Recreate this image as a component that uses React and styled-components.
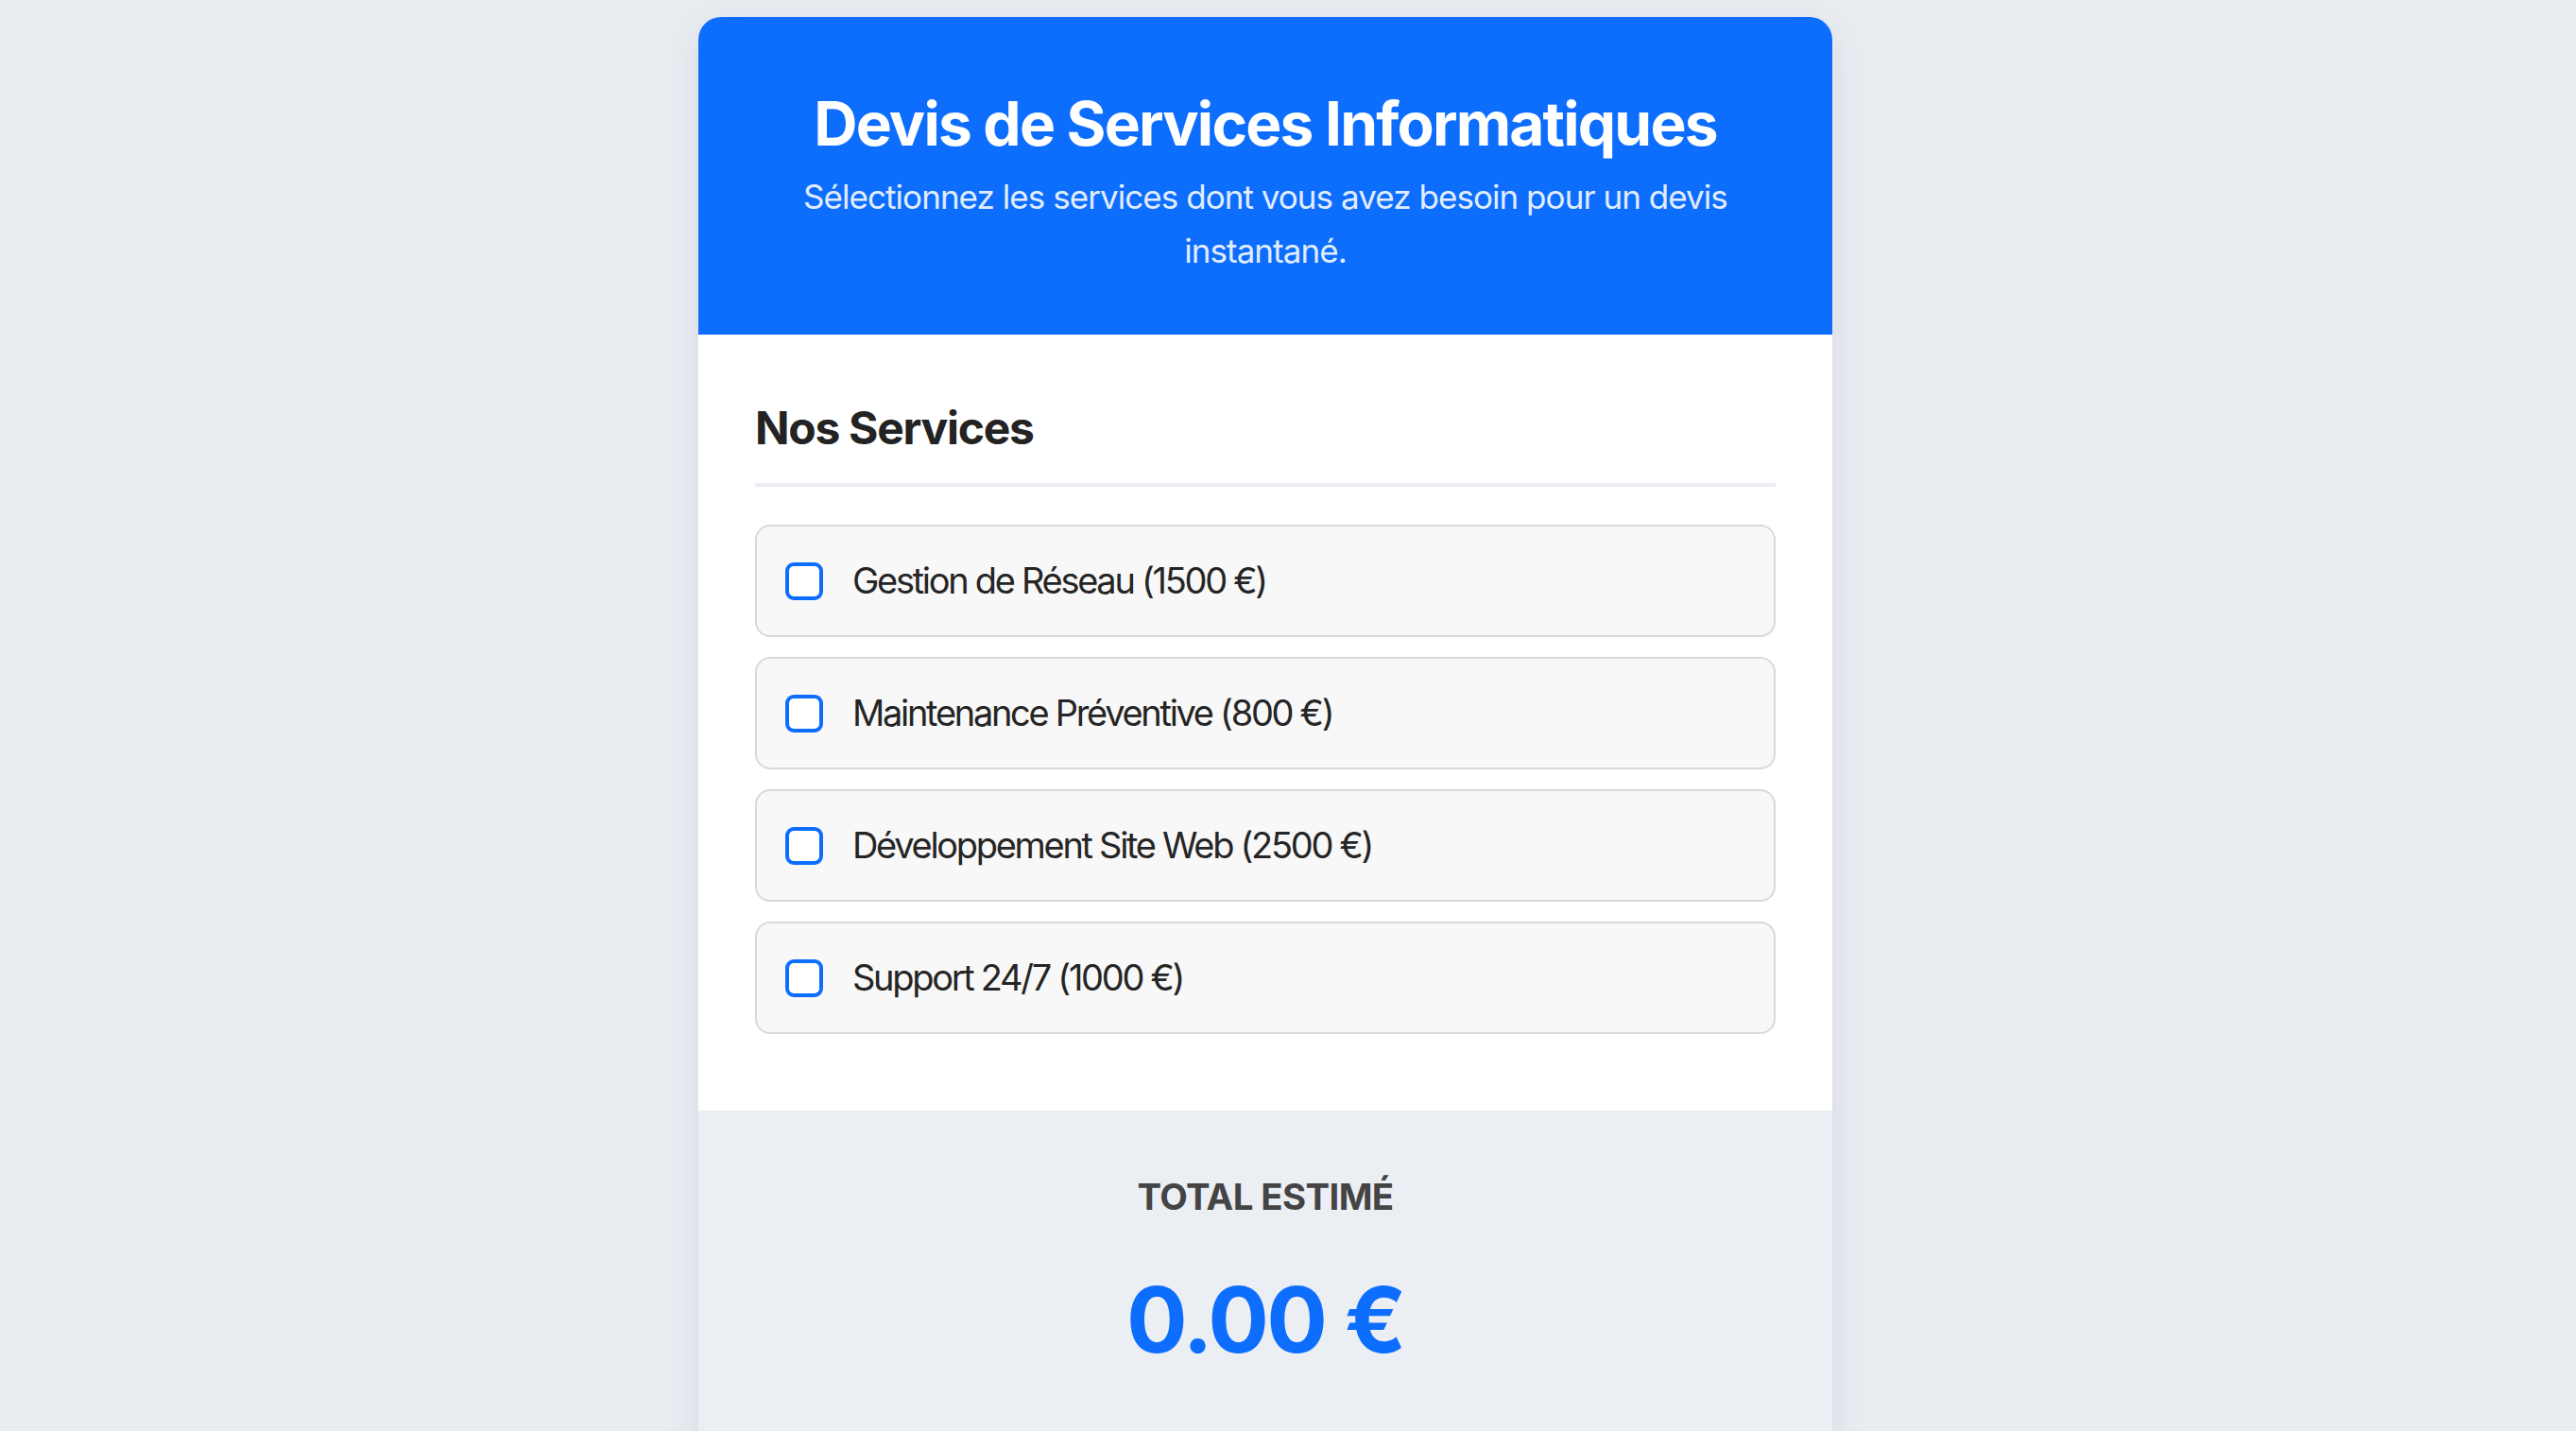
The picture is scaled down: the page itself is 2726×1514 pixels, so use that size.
import React, { useState } from "react";
import styled, { createGlobalStyle } from "styled-components";

const GlobalStyle = createGlobalStyle`
  html, body {
    margin: 0;
    padding: 0;
    background: #e9ecf1;
    font-family: Inter, "Noto Sans", "Liberation Sans", sans-serif;
    -webkit-font-smoothing: antialiased;
  }
  * { box-sizing: border-box; }
`;

const Page = styled.div`
  display: flex;
  justify-content: center;
  padding: 18px 48px 0 0;
  min-height: 1514px;
`;

const Card = styled.div`
  width: 1200px;
  background: #ffffff;
  border-radius: 24px 24px 0 0;
  overflow: hidden;
  box-shadow: 0 10px 40px rgba(20, 30, 60, 0.08);
  display: flex;
  flex-direction: column;
`;

const Header = styled.header`
  background: #0d6efd;
  color: #ffffff;
  text-align: center;
  padding: 74px 60px 61px;
`;

const Title = styled.h1`
  margin: 0 0 11px;
  font-size: 64px;
  line-height: 77px;
  font-weight: 700;
  letter-spacing: -1.8px;
`;

const Subtitle = styled.p`
  margin: 0;
  font-size: 35px;
  line-height: 56.5px;
  font-weight: 400;
  letter-spacing: -0.95px;
  color: rgba(255, 255, 255, 0.9);
`;

const Body = styled.section`
  padding: 70px 60px 81px;
`;

const SectionTitle = styled.h2`
  margin: 0 0 40px;
  padding-bottom: 29px;
  border-bottom: 4px solid #eaedf2;
  font-size: 48px;
  line-height: 58px;
  font-weight: 700;
  letter-spacing: -1.3px;
  color: #232323;
`;

const List = styled.div`
  display: flex;
  flex-direction: column;
  gap: 21px;
`;

const Item = styled.label`
  display: flex;
  align-items: center;
  gap: 31px;
  padding: 28px 30px;
  background: #f8f8f8;
  border: 2px solid #d9d9d9;
  border-radius: 16px;
  cursor: pointer;
`;

const Check = styled.input.attrs({ type: "checkbox" })`
  appearance: none;
  -webkit-appearance: none;
  margin: 0;
  width: 40px;
  height: 40px;
  flex: none;
  border: 4px solid #0d6efd;
  border-radius: 9px;
  background: #ffffff;
  cursor: pointer;
  &:checked {
    background: #0d6efd;
  }
`;

const ItemText = styled.span`
  font-size: 38px;
  line-height: 59px;
  letter-spacing: -2.3px;
  color: #252525;
`;

const Totals = styled.section`
  background: #ebeef3;
  text-align: center;
  padding: 68px 60px 80px;
  flex: 1;
`;

const TotalLabel = styled.div`
  font-size: 38.4px;
  line-height: 46px;
  font-weight: 700;
  letter-spacing: -0.6px;
  color: #444444;
  text-transform: uppercase;
`;

const TotalValue = styled.div`
  margin-top: 50px;
  font-size: 96px;
  line-height: 115px;
  font-weight: 700;
  color: #0d6efd;
  letter-spacing: -2.5px;
`;

const services = [
  { name: "Gestion de Réseau", price: 1500 },
  { name: "Maintenance Préventive", price: 800 },
  { name: "Développement Site Web", price: 2500 },
  { name: "Support 24/7", price: 1000 },
];

export default function App() {
  const [selected, setSelected] = useState([]);
  const toggle = (i) =>
    setSelected((s) => (s.includes(i) ? s.filter((x) => x !== i) : [...s, i]));
  const total = selected.reduce((sum, i) => sum + services[i].price, 0);

  return (
    <>
      <GlobalStyle />
      <Page>
        <Card>
          <Header>
            <Title>Devis de Services Informatiques</Title>
            <Subtitle>
              Sélectionnez les services dont vous avez besoin pour un devis instantané.
            </Subtitle>
          </Header>
          <Body>
            <SectionTitle>Nos Services</SectionTitle>
            <List>
              {services.map((s, i) => (
                <Item key={s.name}>
                  <Check checked={selected.includes(i)} onChange={() => toggle(i)} />
                  <ItemText>
                    {s.name} ({s.price} €)
                  </ItemText>
                </Item>
              ))}
            </List>
          </Body>
          <Totals>
            <TotalLabel>Total Estimé</TotalLabel>
            <TotalValue>{total.toFixed(2)} €</TotalValue>
          </Totals>
        </Card>
      </Page>
    </>
  );
}
